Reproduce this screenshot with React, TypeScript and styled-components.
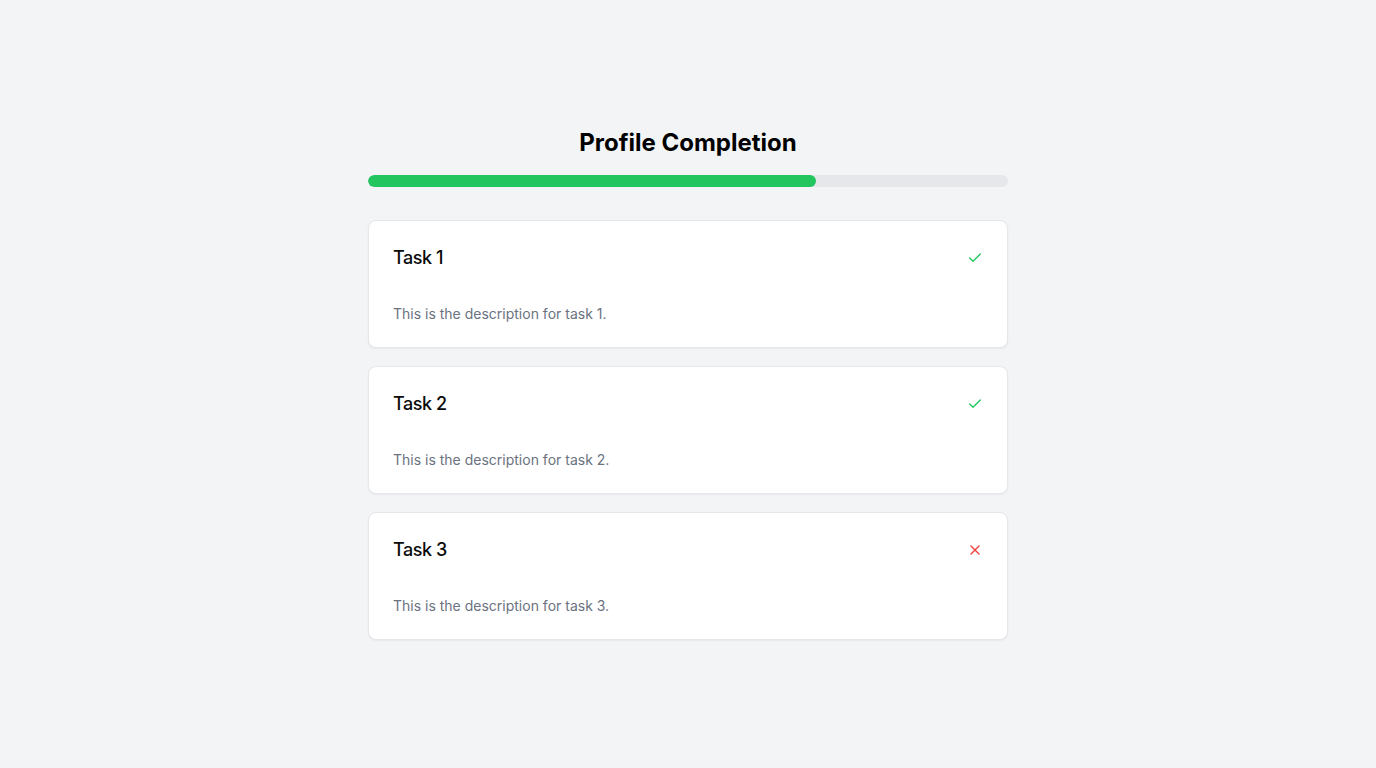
import React from "react";
import styled, { createGlobalStyle } from "styled-components";

const GlobalStyle = createGlobalStyle`
  * { box-sizing: border-box; }
  html, body { margin: 0; padding: 0; background: #f3f4f6; }
  body { font-family: Inter, "Noto Sans", "Liberation Sans", sans-serif; -webkit-font-smoothing: antialiased; }
`;

const Page = styled.main`
  min-height: 100vh;
  display: flex;
  justify-content: center;
  padding-top: 127px;
`;

const Wrapper = styled.div`
  width: 640px;
  display: flex;
  flex-direction: column;
`;

const Title = styled.h1`
  margin: 0 0 16px;
  font-size: 24px;
  line-height: 32px;
  font-weight: 700;
  color: #000;
  text-align: center;
`;

const Track = styled.div`
  height: 12px;
  border-radius: 9999px;
  background: #e5e7eb;
  overflow: hidden;
  margin-bottom: 33px;
`;

const Fill = styled.div`
  height: 100%;
  background: #22c55e;
  border-radius: 9999px;
`;

const List = styled.div`
  display: flex;
  flex-direction: column;
  gap: 18px;
`;

const Card = styled.div`
  background: #fff;
  border: 1px solid #e5e7eb;
  border-radius: 8px;
  box-shadow: 0 1px 2px 0 rgba(0, 0, 0, 0.05);
  padding: 25px 24px 23px;
`;

const CardHeader = styled.div`
  display: flex;
  align-items: center;
  justify-content: space-between;
  height: 24px;
  margin-bottom: 34px;
`;

const TaskTitle = styled.h3`
  margin: 0;
  font-size: 18px;
  line-height: 24px;
  font-weight: 500;
  letter-spacing: -0.45px;
  color: #0a0a0a;
`;

const Description = styled.p`
  margin: 0;
  font-size: 14px;
  line-height: 20px;
  color: #6b7280;
`;

const IconBox = styled.span<{ $done: boolean }>`
  display: flex;
  width: 16px;
  height: 16px;
  color: ${(p) => (p.$done ? "#22c55e" : "#ef4444")};
`;

const CheckIcon = () => (
  <svg width="16" height="16" viewBox="0 0 24 24" fill="none" stroke="currentColor" strokeWidth="2" strokeLinecap="round" strokeLinejoin="round">
    <path d="M20 6 9 17l-5-5" />
  </svg>
);

const XIcon = () => (
  <svg width="16" height="16" viewBox="0 0 24 24" fill="none" stroke="currentColor" strokeWidth="2" strokeLinecap="round" strokeLinejoin="round">
    <path d="M18 6 6 18" />
    <path d="m6 6 12 12" />
  </svg>
);

const tasks = [
  { id: 1, done: true },
  { id: 2, done: true },
  { id: 3, done: false },
];

export default function App() {
  const progress = 70;
  return (
    <>
      <GlobalStyle />
      <Page>
        <Wrapper>
          <Title>Profile Completion</Title>
          <Track>
            <Fill style={{ width: `${progress}%` }} />
          </Track>
          <List>
            {tasks.map((t) => (
              <Card key={t.id}>
                <CardHeader>
                  <TaskTitle>Task {t.id}</TaskTitle>
                  <IconBox $done={t.done}>{t.done ? <CheckIcon /> : <XIcon />}</IconBox>
                </CardHeader>
                <Description>This is the description for task {t.id}.</Description>
              </Card>
            ))}
          </List>
        </Wrapper>
      </Page>
    </>
  );
}
